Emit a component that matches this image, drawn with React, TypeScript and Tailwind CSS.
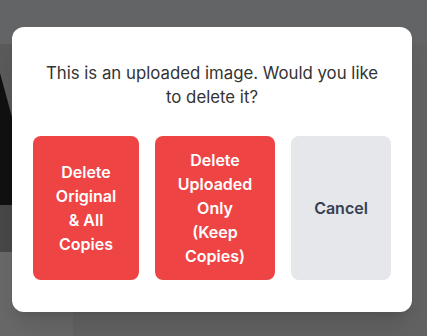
import React from "react";

export default function App() {
  return (
    <div
      className="relative h-[336px] w-[427px] overflow-hidden bg-[#606060]"
      style={{ fontFamily: "Inter, 'Noto Sans', sans-serif" }}
    >
      {/* Page underneath the overlay */}
      <div className="h-[44px] bg-[#636466]" />
      <div className="flex">
        <div className="w-[73px]">
          <svg width="73" height="161" viewBox="0 0 73 161" className="block">
            <rect width="73" height="161" fill="#111111" />
            <polygon points="0,0 73,0 73,161 36,161 0,29" fill="#5a5a5a" />
          </svg>
          <div className="h-[47px] bg-[#474747]" />
          <div className="h-[84px] bg-[#686868]" />
        </div>
        <div className="flex-1 bg-[#626262]" />
      </div>

      {/* Dialog */}
      <div className="absolute inset-0 pl-3 pt-[27px]">
        <div className="w-[400px] rounded-xl bg-white px-[21px] pb-8 pt-[34px] shadow-xl">
          <p className="text-center text-[16.8px] leading-6 text-[#333333]">
            This is an uploaded image. Would you like
            <br />
            to delete it?
          </p>
          <div className="mt-[27px] flex gap-4">
            <button
              type="button"
              className="flex h-[144px] w-[106px] items-center justify-center rounded-lg bg-[#ef4444] px-6 text-center text-base font-semibold leading-6 text-white"
            >
              Delete Original & All Copies
            </button>
            <button
              type="button"
              className="flex h-[144px] w-[120px] items-center justify-center rounded-lg bg-[#ef4444] px-6 text-center text-base font-semibold leading-6 text-white"
            >
              Delete Uploaded Only (Keep Copies)
            </button>
            <button
              type="button"
              className="flex h-[144px] w-[100px] items-center justify-center rounded-lg bg-[#e5e7eb] px-6 text-center text-base font-semibold leading-6 text-[#374151]"
            >
              Cancel
            </button>
          </div>
        </div>
      </div>
    </div>
  );
}
